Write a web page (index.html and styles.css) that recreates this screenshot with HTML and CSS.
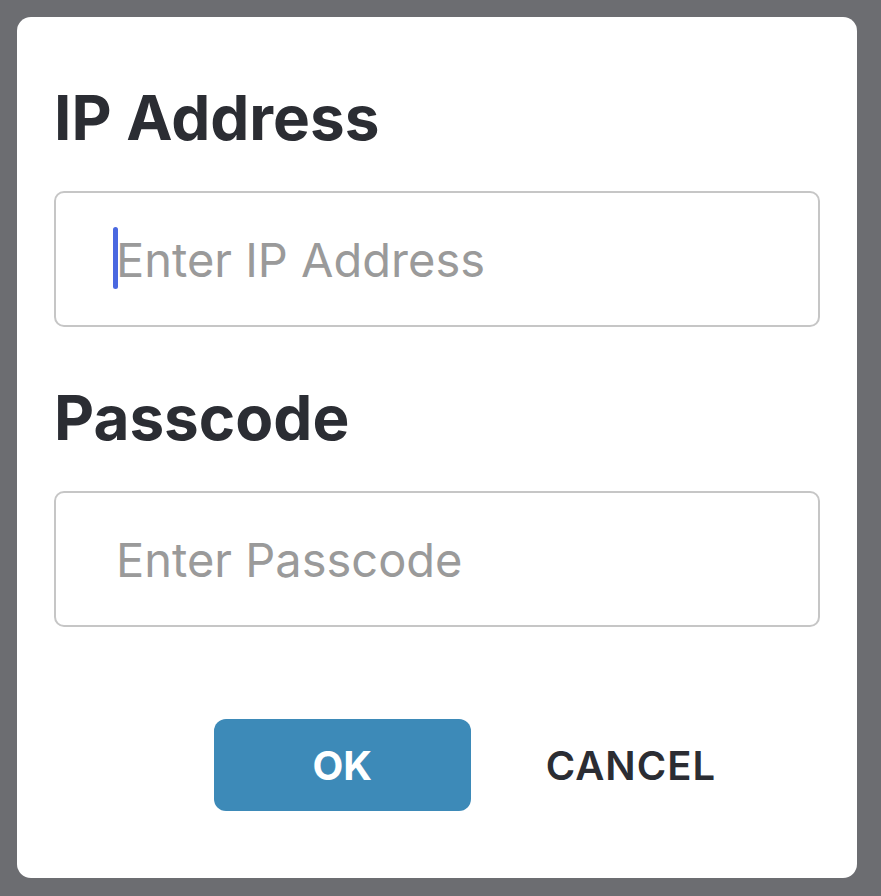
FILE: index.html
```html
<!DOCTYPE html>
<html lang="en">
<head>
    <meta charset="UTF-8">
    <meta name="viewport" content="width=device-width, initial-scale=1.0">
    <title>Connect</title>
    <link rel="stylesheet" href="styles.css">
</head>
<body>
    <div class="dialog">
        <div class="field">
            <h2 class="field-label">IP Address</h2>
            <div class="input-box">
                <span class="caret"></span>
                <span class="placeholder">Enter IP Address</span>
            </div>
        </div>

        <div class="field">
            <h2 class="field-label">Passcode</h2>
            <div class="input-box">
                <span class="placeholder">Enter Passcode</span>
            </div>
        </div>

        <div class="actions">
            <button class="btn btn-ok">OK</button>
            <button class="btn btn-cancel">CANCEL</button>
        </div>
    </div>
</body>
</html>
```

FILE: styles.css
```css
body {
    font-family: Inter, "Liberation Sans", Arial, sans-serif;
    background-color: #6c6d71;
    margin: 0;
    padding: 17px;
    height: 896px;
    box-sizing: border-box;
    overflow: hidden;
}

.dialog {
    background-color: #ffffff;
    border-radius: 14px;
    width: 840px;
    height: 861px;
    box-sizing: border-box;
    padding: 63px 37px 0;
}

.field {
    margin-bottom: 53px;
}

.field-label {
    font-size: 62px;
    font-weight: 700;
    line-height: 76px;
    color: #2b2d33;
    margin: 0 0 35px;
}

.input-box {
    display: flex;
    align-items: center;
    height: 136px;
    box-sizing: border-box;
    border: 2px solid #c6c6c6;
    border-radius: 10px;
    padding-left: 60px;
    position: relative;
}

.placeholder {
    font-size: 47px;
    color: #9a9a9a;
}

.caret {
    position: absolute;
    left: 57px;
    top: 34px;
    width: 5px;
    height: 62px;
    border-radius: 3px;
    background-color: #4a68e0;
}

.actions {
    display: flex;
    justify-content: flex-end;
    align-items: center;
    padding-right: 104px;
    gap: 75px;
    margin-top: 92px;
}

.btn {
    font-family: inherit;
    font-size: 40px;
    font-weight: 700;
    border: none;
    background: none;
    cursor: pointer;
}

.btn-ok {
    background-color: #3d8ab8;
    color: #ffffff;
    width: 257px;
    height: 92px;
    border-radius: 12px;
}

.btn-cancel {
    color: #2b2d33;
    font-weight: 600;
    letter-spacing: 1px;
    padding: 0;
}
```
